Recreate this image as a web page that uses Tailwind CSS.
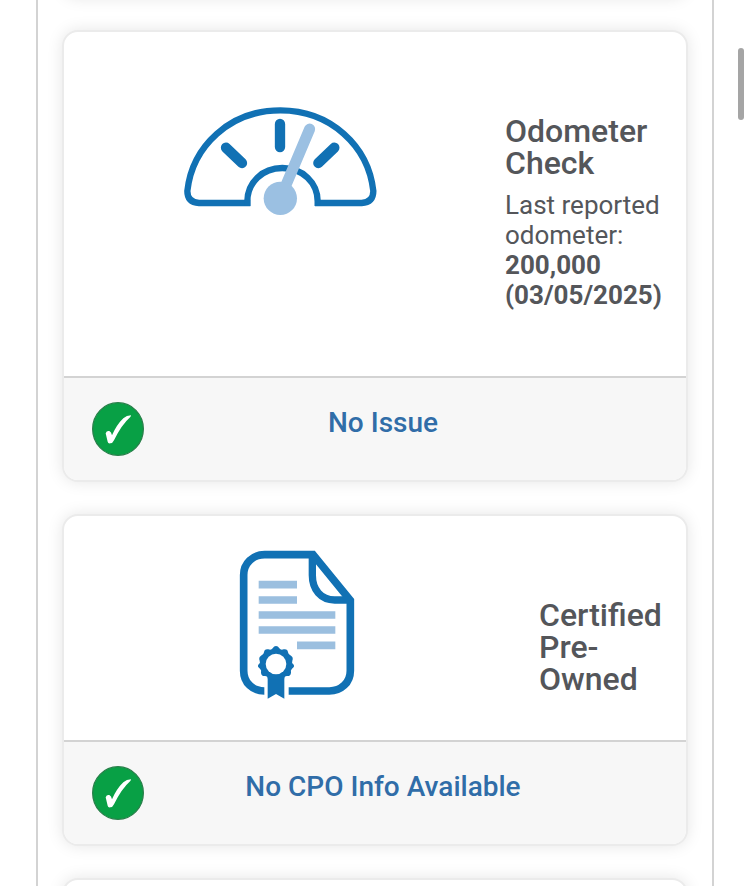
<!DOCTYPE html>
<html lang="en">
<head>
  <meta charset="UTF-8" />
  <title>Vehicle History</title>
  <script src="https://cdn.jsdelivr.net/npm/@tailwindcss/browser@4"></script>
</head>
<body class="bg-white h-[886px] overflow-hidden relative font-['Roboto',sans-serif] text-[#54565a]">
  <main class="ml-9 w-[678px] h-[886px] overflow-hidden border-x-2 border-[#d3d3d3] px-6">
    <div class="-mt-[62px] h-[60px] rounded-2xl border-2 border-[#ebebeb] bg-[#f7f7f7] shadow-[0_0_16px_rgba(0,0,0,0.1)]"></div>

    <!-- Odometer check -->
    <section class="mt-8 h-[452px] flex flex-col rounded-2xl border-2 border-[#ebebeb] bg-white overflow-hidden shadow-[0_0_16px_rgba(0,0,0,0.1)]">
      <div class="flex-1 flex items-start gap-2 pr-[25px]">
        <div class="flex-1 flex justify-center pt-[74px]">
          <svg class="w-[194px] h-[110px]" viewBox="42 48 582 330" fill="none">
            <path d="M241 339 H87 Q52 337 52 303 C67 168 180 61 331 61 C482 61 595 168 610 303 Q610 337 575 339 H435" stroke="#1171b4" stroke-width="19" />
            <path d="M232 348 V334 C232 278 277 234 337 234 C398 234 443 278 443 334 V348" stroke="#1171b4" stroke-width="19" />
            <path d="M330 102 V171 M168 173 L216 219 M493 173 L445 219" stroke="#1171b4" stroke-width="31" stroke-linecap="round" />
            <path d="M419 117 L346 290" stroke="#9bc0e2" stroke-width="33" stroke-linecap="round" />
            <circle cx="331" cy="325" r="50" fill="#9bc0e2" />
          </svg>
        </div>
        <div class="w-[156px] pt-[83px] whitespace-nowrap">
          <h2 class="h-16 text-[32px] leading-8 font-medium">Odometer<br />Check</h2>
          <p class="mt-[11px] text-[26px] leading-[30px]">Last reported<br />odometer:<br /><b class="font-bold">200,000<br />(03/05/2025)</b></p>
        </div>
      </div>
      <div class="h-[104px] flex items-start border-t-2 border-[#d3d3d3] bg-[#f7f7f7] pl-7 pr-16 pt-6">
        <svg class="w-[52px] h-[54px] shrink-0" viewBox="216 126 156 162">
          <ellipse cx="294" cy="207" rx="76" ry="79" fill="#08a045" stroke="#28804a" stroke-width="4" />
          <path d="M257 220 Q260 211 268 213 Q274 216 276 226 Q290 194 310 175 Q320 166 333 166 Q334 167 331 171 Q304 195 282 241 Q278 250 271 250 Q264 251 263 245 Q259 229 257 220 Z" fill="#fff" />
        </svg>
        <a class="flex-1 pt-[5px] text-center text-[28px] leading-8 font-medium text-[#306da8]">No Issue</a>
      </div>
    </section>

    <!-- Certified pre-owned -->
    <section class="mt-8 h-[332px] flex flex-col rounded-2xl border-2 border-[#ebebeb] bg-white overflow-hidden shadow-[0_0_16px_rgba(0,0,0,0.1)]">
      <div class="flex-1 flex items-start gap-2 pr-[25px]">
        <div class="flex-1 flex justify-center pt-[34px] pr-px">
          <svg class="w-[116px] h-[150px]" viewBox="44 30 348 450" fill="none">
            <path d="M120 453 C85 453 58 428 58 392 V105 C58 70 85 44 121 44 H266 L378 181 V392 C378 428 350 453 315 453 H193" stroke="#1171b4" stroke-width="23" />
            <path d="M264 48 V106 C264 148 289 180 331 180 H374" stroke="#1171b4" stroke-width="22" />
            <path d="M103 134 H218 M103 180 H218 M103 225 H333 M103 270 H333 M218 316 H333" stroke="#9bbfdf" stroke-width="23" />
            <path d="M130 400 H180 V476 L155 462 L130 476 Z" fill="#1171b4" />
            <path d="M155 318 Q161 318 165 325 Q169 331 178 328 Q190 326 191 337 Q192 345 200 347 Q208 352 204 362 Q201 369 207 373 Q213 380 203 386 Q198 391 200 398 Q199 409 188 408 Q180 408 179 418 H131 Q130 408 122 408 Q111 409 110 398 Q112 391 107 386 Q97 380 103 373 Q109 369 106 362 Q102 352 110 347 Q118 345 119 337 Q120 326 132 328 Q141 331 145 325 Q149 318 155 318 Z" fill="#1171b4" />
            <circle cx="155" cy="372" r="31" fill="#fff" />
          </svg>
        </div>
        <div class="w-[122px] pt-[83px] whitespace-nowrap">
          <h2 class="text-[32px] leading-8 font-medium">Certified<br />Pre-<br />Owned</h2>
        </div>
      </div>
      <div class="h-[104px] flex items-start border-t-2 border-[#d3d3d3] bg-[#f7f7f7] pl-7 pr-16 pt-6">
        <svg class="w-[52px] h-[54px] shrink-0" viewBox="216 126 156 162">
          <ellipse cx="294" cy="207" rx="76" ry="79" fill="#08a045" stroke="#28804a" stroke-width="4" />
          <path d="M257 220 Q260 211 268 213 Q274 216 276 226 Q290 194 310 175 Q320 166 333 166 Q334 167 331 171 Q304 195 282 241 Q278 250 271 250 Q264 251 263 245 Q259 229 257 220 Z" fill="#fff" />
        </svg>
        <a class="flex-1 pt-[5px] text-center text-[28px] leading-8 font-medium text-[#306da8]">No CPO Info Available</a>
      </div>
    </section>

    <div class="mt-8 h-20 rounded-2xl border-2 border-[#ebebeb] bg-white shadow-[0_0_16px_rgba(0,0,0,0.1)]"></div>
  </main>

  <!-- scrollbar -->
  <div class="absolute top-12 right-1.5 w-1.5 h-[72px] rounded-full bg-[#a5a5a5]"></div>
</body>
</html>
